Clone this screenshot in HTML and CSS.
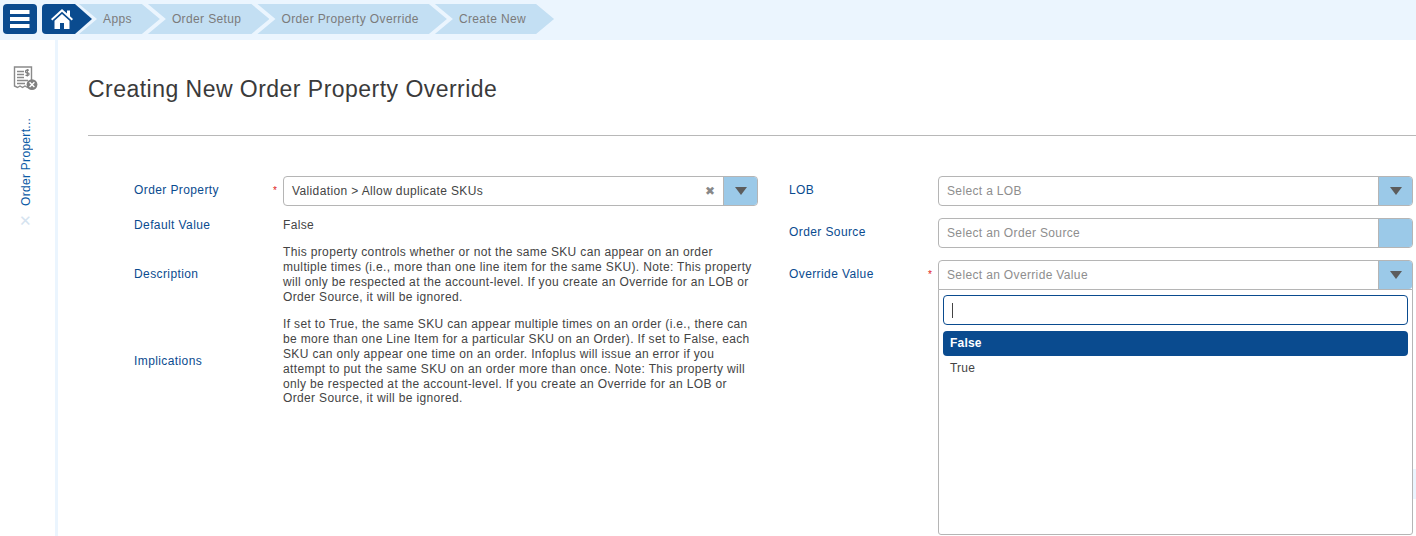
FILE: index.html
```html
<!DOCTYPE html>
<html lang="en">
<head>
<meta charset="utf-8">
<title>Creating New Order Property Override</title>
<link rel="stylesheet" href="styles.css">
</head>
<body>
<header class="topbar">
  <button class="menu-btn" aria-label="Menu">
    <svg width="20" height="18" viewBox="0 0 20 18"><path fill="#fff" d="M0 0h19.500v4H0zM0 7h19.500v4H0zM0 14h19.500v4H0z"/></svg>
  </button>
  <div class="crumbs">
    <a class="home" aria-label="Home">
      <svg width="22" height="20" viewBox="0 0 22 20"><path fill="#fff" d="M11 0 0 10l1.300 1.500L11 2.800l9.700 8.700L22 10l-3-2.700V1.500h-3v3z"/><path fill="#fff" d="M11 5 3.500 11.700V20h5.500v-6h4v6h5.500v-8.300z"/></svg>
    </a>
    <a class="crumb">Apps</a>
    <a class="crumb">Order Setup</a>
    <a class="crumb">Order Property Override</a>
    <a class="crumb">Create New</a>
  </div>
</header>
<div class="layout">
  <aside class="sidebar">
    <svg class="side-icon" width="26" height="26" viewBox="0 0 26 26">
      <path fill="#fff" stroke="#8a8a8a" stroke-width="1.400" d="M1.500 1h17v20.500l-2-1.500-2 1.500-2.500-1.500-2.500 1.500-2.500-1.500-2.500 1.500-3-1.500z"/>
      <path stroke="#8a8a8a" stroke-width="1.400" d="M4 5.500h7M4 8.500h7M4 11.500h7M4 14.500h11M4 17.500h8"/>
      <path fill="none" stroke="#7f7f7f" stroke-width="1.200" d="M16 4.200h-2.200a1.200 1.200 0 0 0 0 2.600h1a1.300 1.300 0 0 1 0 2.600H12.500M14.300 3v7.500"/>
      <circle cx="19" cy="18.600" r="5.400" fill="#808080"/>
      <path stroke="#fff" stroke-width="1.400" d="m16.600 16.200 4.800 4.800M21.400 16.200l-4.800 4.800"/>
    </svg>
    <div class="tab-label">Order Propert...</div>
    <div class="tab-close">✕</div>
  </aside>
  <main class="main">
    <h1 class="title">Creating New Order Property Override</h1>
    <hr class="rule">
    <div class="form">
      <section class="col">
        <div class="row">
          <span class="label">Order Property</span><span class="star">*</span>
          <div class="select">
            <span class="value">Validation &gt; Allow duplicate SKUs</span>
            <span class="clear">✖</span>
            <span class="arrow"><i class="caret"></i></span>
          </div>
        </div>
        <div class="row row-first-text row-spaced">
          <span class="label label-flat">Default Value</span><span class="star"></span>
          <div class="text">False</div>
        </div>
        <div class="row row-spaced">
          <span class="label label-text">Description</span><span class="star"></span>
          <div class="text">This property controls whether or not the same SKU can appear on an order multiple times (i.e., more than one line item for the same SKU). Note: This property will only be respected at the account-level. If you create an Override for an LOB or Order Source, it will be ignored.</div>
        </div>
        <div class="row">
          <span class="label label-text">Implications</span><span class="star"></span>
          <div class="text">If set to True, the same SKU can appear multiple times on an order (i.e., there can be more than one Line Item for a particular SKU on an Order). If set to False, each SKU can only appear one time on an order. Infoplus will issue an error if you attempt to put the same SKU on an order more than once. Note: This property will only be respected at the account-level. If you create an Override for an LOB or Order Source, it will be ignored.</div>
        </div>
      </section>
      <section class="col">
        <div class="row">
          <span class="label">LOB</span><span class="star"></span>
          <div class="select">
            <span class="placeholder">Select a LOB</span>
            <span class="arrow"><i class="caret"></i></span>
          </div>
        </div>
        <div class="row">
          <span class="label">Order Source</span><span class="star"></span>
          <div class="select">
            <span class="placeholder">Select an Order Source</span>
            <span class="arrow"></span>
          </div>
        </div>
        <div class="row">
          <span class="label">Override Value</span><span class="star">*</span>
          <div class="select open">
            <span class="placeholder">Select an Override Value</span>
            <span class="arrow"><i class="caret"></i></span>
            <div class="dropdown">
              <div class="search"><i class="cursor"></i></div>
              <div class="option active">False</div>
              <div class="option">True</div>
            </div>
          </div>
        </div>
      </section>
    </div>
  </main>
</div>
<div class="edge-tab"></div>
</body>
</html>
```

FILE: styles.css
```css
* { box-sizing: border-box; }
html, body { height: 536px; overflow: hidden; }
body {
  margin: 0;
  position: relative;
  background: #fff;
  color: #444;
  font-family: "Liberation Sans", Arial, sans-serif;
  font-size: 12px;
}
.topbar {
  height: 40px;
  background: #ebf5fe;
  display: flex;
  align-items: center;
  padding: 0 0 2px 3px;
}
.menu-btn {
  width: 34px;
  height: 30px;
  border: 0;
  padding: 0;
  border-radius: 4px;
  background: #0a4b8f;
  display: flex;
  align-items: center;
  justify-content: center;
}
.crumbs { display: flex; margin-left: 5px; height: 30px; }
.home {
  width: 50px;
  height: 30px;
  background: #0a4b8f;
  border-radius: 4px 0 0 4px;
  clip-path: polygon(0 0, 33px 0, 100% 50%, 33px 100%, 0 100%);
  display: flex;
  align-items: center;
  padding-left: 9px;
  position: relative;
  z-index: 1;
}
.crumb {
  height: 30px;
  line-height: 30px;
  padding: 0 28px 0 24px;
  margin-left: -12px;
  background: #c3dff3;
  color: #7b7b7b;
  letter-spacing: 0.38px;
  white-space: nowrap;
  clip-path: polygon(0 0, calc(100% - 18px) 0, 100% 50%, calc(100% - 18px) 100%, 0 100%, 18px 50%);
}
.home + .crumb { margin-left: -13px; }
.layout { display: flex; height: 496px; }
.sidebar {
  width: 58px;
  flex: none;
  border-right: 3px solid #ebf5fe;
  display: flex;
  flex-direction: column;
  align-items: center;
  padding: 26px 3px 0 0;
}
.side-icon { display: block; }
.tab-label {
  writing-mode: vertical-rl;
  transform: rotate(180deg);
  margin-top: 26px;
  color: #0a5aa5;
  font-size: 12px;
  letter-spacing: 0.3px;
  height: 88px;
  white-space: nowrap;
  text-align: left;
}
.tab-close { color: #d5e3f0; font-size: 15px; margin: 7px 2px 0 0; line-height: 16px; }
.main { flex: 1; min-width: 0; padding-left: 30px; }
.title {
  margin: 36px 0 0;
  font-size: 23px;
  font-weight: normal;
  line-height: 26px;
  color: #3a3a3a;
  letter-spacing: 0.47px;
}
.rule { margin: 33px 0 0; border: 0; border-top: 1px solid #b8b8b8; }
.form { display: flex; gap: 31px; padding: 40px 3px 0 46px; }
.col { flex: 0 0 624px; display: flex; flex-direction: column; gap: 12px; }
.row { display: flex; align-items: center; }
.row-first-text { margin-top: -0.5px; }
.row-spaced { margin-bottom: 1px; }
.label {
  flex: 0 0 139px;
  color: #0a4b8f;
  letter-spacing: 0.4px;
  padding-bottom: 3px;
}
.label-flat { padding-bottom: 0; }
.label-text { padding-bottom: 2px; }
.star { flex: 0 0 10px; color: #e02020; font-size: 10px; line-height: 10px; }
.text {
  flex: 1;
  color: #444;
  line-height: 14.8px;
  letter-spacing: 0.35px;
  padding-right: 6px;
}
.select {
  flex: 1;
  height: 30px;
  position: relative;
  display: flex;
  align-items: center;
  border: 1px solid #b5b5b5;
  border-radius: 4px;
  padding-left: 8px;
  background: #fff;
}
.value { flex: 1; color: #444; letter-spacing: 0.37px; }
.placeholder { flex: 1; color: #8e8e8e; letter-spacing: 0.35px; }
.clear { color: #888; font-size: 12px; margin-right: 8px; }
.arrow {
  width: 34px;
  height: 28px;
  flex: none;
  background: #9bc9e8;
  border-left: 1px solid #b5b5b5;
  border-radius: 0 3px 3px 0;
  display: flex;
  align-items: center;
  justify-content: center;
}
.caret {
  width: 0;
  height: 0;
  border-left: 6px solid transparent;
  border-right: 6px solid transparent;
  border-top: 8px solid #5c5c5c;
}
.open { border-radius: 4px 4px 0 0; }
.dropdown {
  position: absolute;
  left: -1px;
  right: -1px;
  top: 28px;
  height: 246px;
  background: #fff;
  border: 1px solid #b5b5b5;
  border-radius: 0 0 3px 3px;
  padding: 5px 4px 0;
  z-index: 5;
}
.search {
  height: 30px;
  border: 1px solid #0a4b8f;
  border-radius: 4px;
  display: flex;
  align-items: center;
  padding-left: 8px;
  margin-bottom: 6px;
}
.cursor { width: 1px; height: 15px; background: #444; }
.option {
  height: 25px;
  line-height: 24px;
  padding-left: 7px;
  color: #444;
  letter-spacing: 0.2px;
}
.active {
  background: #0a4b8f;
  color: #fff;
  font-weight: bold;
  border-radius: 4px;
  padding-left: 7px;
}
.edge-tab {
  position: absolute;
  left: 1413px;
  top: 469px;
  width: 3px;
  height: 30px;
  background: #ebf5fe;
}
```
